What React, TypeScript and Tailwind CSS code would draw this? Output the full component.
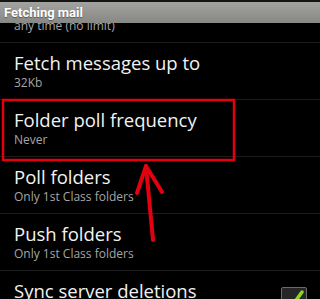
import React from "react";

const items = [
  { title: "Fetch messages up to", summary: "32Kb" },
  { title: "Folder poll frequency", summary: "Never" },
  { title: "Poll folders", summary: "Only 1st Class folders" },
  { title: "Push folders", summary: "Only 1st Class folders" },
];

function Row({ title, summary, check }: { title?: string; summary?: string; check?: boolean }) {
  return (
    <div className="h-[57px] border-b border-[#1c1c1c] flex items-start justify-between pl-[14px] pr-[13px] pt-2">
      <div className="flex flex-col">
        <span className="h-[24px] text-[18.5px] leading-[24px] text-[#f2f2f2]">{title}</span>
        {summary && <span className="text-[12px] leading-[16px] text-[#a6a6a6]">{summary}</span>}
      </div>
      {check && (
        <div className="mt-[8px] w-[26px] h-[26px] rounded-[2px] border border-[#6b6b6b] bg-[#262626] flex items-center justify-center">
          <svg width="22" height="22" viewBox="0 0 22 22">
            <path d="M4 12 L9 17 L19 3" stroke="#8fd41e" strokeWidth="3.5" fill="none" strokeLinecap="round" />
          </svg>
        </div>
      )}
    </div>
  );
}

export default function App() {
  return (
    <div
      className="relative w-[320px] h-[299px] bg-black overflow-hidden flex flex-col"
      style={{ fontFamily: "'Open Sans', Roboto, sans-serif" }}
    >
      {/* title bar */}
      <div className="relative z-10 shrink-0 h-[23px] border-t-2 border-[#151515] bg-gradient-to-b from-[#a3a3a0] to-[#878784] pl-[4px] flex items-center">
        <span className="text-[13px] font-bold text-white [text-shadow:0_1px_1px_rgba(0,0,0,0.4)] font-[Roboto,sans-serif]">
          Fetching mail
        </span>
      </div>

      {/* scrolled list, first row half hidden under the title bar */}
      <div className="flex-1 overflow-hidden">
        <div className="-mt-[37px]">
          <Row summary="any time (no limit)" />
          {items.map((it) => (
            <Row key={it.title} title={it.title} summary={it.summary} />
          ))}
          <Row title="Sync server deletions" summary="Remove messages when deleted on server" check />
        </div>
      </div>

      {/* annotation */}
      <svg className="absolute inset-0 pointer-events-none" width="320" height="299" viewBox="0 0 320 299">
        <rect x="3" y="100" width="231" height="60" fill="none" stroke="#e3000f" strokeWidth="2.5" />
        <path d="M146 166 L153 240" stroke="#e3000f" strokeWidth="4" strokeLinecap="round" />
        <path d="M137 193 L146 166 L162 192" stroke="#e3000f" strokeWidth="4" fill="none" strokeLinecap="round" strokeLinejoin="round" />
      </svg>
    </div>
  );
}
